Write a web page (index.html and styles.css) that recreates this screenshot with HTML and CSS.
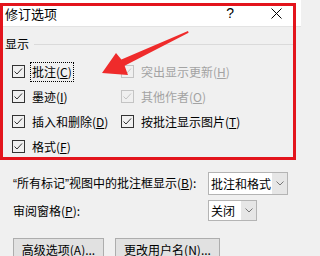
FILE: index.html
```html
<!DOCTYPE html>
<html lang="zh-CN">
<head>
<meta charset="utf-8">
<title>修订选项</title>
<link rel="stylesheet" href="styles.css">
</head>
<body>
<div class="dialog">
  <div class="titlebar">
    <span class="title">修订选项</span>
    <span class="controls">
      <span class="help">?</span>
      <svg class="close" width="11" height="11" viewBox="0 0 11 11"><path d="M0.5 0.5 L10.5 10.5 M10.5 0.5 L0.5 10.5" stroke="#000" stroke-width="1" fill="none"/></svg>
    </span>
  </div>

  <div class="group-head">
    <span>显示</span>
    <span class="rule"></span>
  </div>

  <div class="options">
    <label class="opt">
      <svg class="cb" width="13" height="13" viewBox="0 0 13 13"><rect x="0.5" y="0.5" width="12" height="12" fill="none" stroke="#333"/><polyline points="2.5,6.5 5,9 10,3.5" fill="none" stroke="#333" stroke-width="1"/></svg>
      <span class="focus">批注(<u>C</u>)</span>
    </label>
    <label class="opt disabled">
      <svg class="cb" width="13" height="13" viewBox="0 0 13 13"><rect x="0.5" y="0.5" width="12" height="12" fill="none" stroke="#c4c4c4"/><polyline points="2.5,6.5 5,9 10,3.5" fill="none" stroke="#c4c4c4" stroke-width="1"/></svg>
      <span>突出显示更新(<u>H</u>)</span>
    </label>
    <label class="opt">
      <svg class="cb" width="13" height="13" viewBox="0 0 13 13"><rect x="0.5" y="0.5" width="12" height="12" fill="none" stroke="#333"/><polyline points="2.5,6.5 5,9 10,3.5" fill="none" stroke="#333" stroke-width="1"/></svg>
      <span>墨迹(<u>I</u>)</span>
    </label>
    <label class="opt disabled">
      <svg class="cb" width="13" height="13" viewBox="0 0 13 13"><rect x="0.5" y="0.5" width="12" height="12" fill="none" stroke="#c4c4c4"/><polyline points="2.5,6.5 5,9 10,3.5" fill="none" stroke="#c4c4c4" stroke-width="1"/></svg>
      <span>其他作者(<u>O</u>)</span>
    </label>
    <label class="opt">
      <svg class="cb" width="13" height="13" viewBox="0 0 13 13"><rect x="0.5" y="0.5" width="12" height="12" fill="none" stroke="#333"/><polyline points="2.5,6.5 5,9 10,3.5" fill="none" stroke="#333" stroke-width="1"/></svg>
      <span>插入和删除(<u>D</u>)</span>
    </label>
    <label class="opt">
      <svg class="cb" width="13" height="13" viewBox="0 0 13 13"><rect x="0.5" y="0.5" width="12" height="12" fill="none" stroke="#333"/><polyline points="2.5,6.5 5,9 10,3.5" fill="none" stroke="#333" stroke-width="1"/></svg>
      <span>按批注显示图片(<u>T</u>)</span>
    </label>
    <label class="opt">
      <svg class="cb" width="13" height="13" viewBox="0 0 13 13"><rect x="0.5" y="0.5" width="12" height="12" fill="none" stroke="#333"/><polyline points="2.5,6.5 5,9 10,3.5" fill="none" stroke="#333" stroke-width="1"/></svg>
      <span>格式(<u>F</u>)</span>
    </label>
  </div>

  <div class="form-row first">
    <span class="label"><span class="q">“</span>所有标记<span class="q">”</span>视图中的批注框显示(<u>B</u>):</span>
    <div class="combo wide">
      <span class="value">批注和格式</span>
      <span class="arrow"><svg width="8" height="5" viewBox="0 0 8 5"><polyline points="0.5,0.5 4,4 7.5,0.5" fill="none" stroke="#777" stroke-width="1"/></svg></span>
    </div>
  </div>
  <div class="form-row second">
    <span class="label">审阅窗格(<u>P</u>):</span>
    <div class="combo narrow">
      <span class="value">关闭</span>
      <span class="arrow"><svg width="8" height="5" viewBox="0 0 8 5"><polyline points="0.5,0.5 4,4 7.5,0.5" fill="none" stroke="#777" stroke-width="1"/></svg></span>
    </div>
  </div>

  <div class="buttons">
    <button class="btn adv">高级选项(<u>A</u>)...</button>
    <button class="btn user">更改用户名(<u>N</u>)...</button>
  </div>

  <div class="highlight"></div>
  <svg class="pointer" width="301" height="256" viewBox="0 0 301 256">
    <polygon points="102,73 116,53 121.4,59.5 188,31 188.6,32.8 124.6,65.8 128,75" fill="#ef2b2b"/>
  </svg>
</div>
</body>
</html>
```

FILE: styles.css
```css
html, body {
  margin: 0;
  padding: 0;
}
body {
  width: 301px;
  height: 256px;
  overflow: hidden;
  background: #f0f0f0;
  font-family: "Noto Sans CJK SC", "Microsoft YaHei", sans-serif;
  font-size: 12px;
  line-height: 16px;
  color: #000;
}
.dialog {
  position: relative;
  width: 301px;
  height: 256px;
  overflow: hidden;
}
u {
  text-decoration: underline;
  text-underline-offset: 1px;
}
.titlebar {
  height: 27px;
  box-sizing: border-box;
  background: #fff;
  border-bottom: 1px solid #e3e3e3;
  display: flex;
  align-items: center;
  justify-content: space-between;
  padding: 0 19px 0 5px;
}
.title {
  font-size: 13px;
  line-height: 13px;
}
.controls {
  display: flex;
  align-items: center;
  gap: 37px;
}
.help {
  font-family: "Liberation Sans", sans-serif;
  font-size: 14px;
  line-height: 14px;
}
.close {
  display: block;
}
.group-head {
  display: flex;
  align-items: center;
  height: 16px;
  margin-top: 9px;
  padding-left: 5px;
  padding-right: 8px;
}
.rule {
  flex: 1;
  height: 1px;
  background: #dadada;
  margin-left: 5px;
}
.options {
  display: grid;
  grid-template-columns: 109px auto;
  grid-auto-rows: 25px;
  padding-left: 12px;
  margin-top: 7px;
}
.opt {
  display: flex;
  align-items: center;
  gap: 7px;
  white-space: nowrap;
}
.cb {
  display: block;
  flex: none;
}
.opt.disabled {
  color: #a3a3a3;
}
.focus {
  outline: 1px dotted #000;
  outline-offset: 1px;
}
.form-row {
  display: grid;
  grid-template-columns: 195px auto;
  align-items: center;
  padding-left: 13px;
}
.label {
  white-space: nowrap;
}
.q {
  font-family: "Liberation Sans", sans-serif;
}
.form-row.first {
  margin-top: 13px;
}
.form-row.second {
  margin-top: 5px;
}
.combo {
  display: flex;
  box-sizing: border-box;
  border: 1px solid #b4b4b4;
  background: #fff;
}
.combo.wide {
  width: 80px;
  height: 23px;
}
.combo.narrow {
  width: 49px;
  height: 21px;
}
.value {
  flex: 1;
  display: flex;
  align-items: center;
  padding-left: 2px;
  white-space: nowrap;
  overflow: hidden;
}
.arrow {
  width: 15px;
  flex: none;
  background: #e6e6e6;
  display: flex;
  align-items: center;
  justify-content: center;
}
.arrow svg {
  display: block;
}
.buttons {
  display: flex;
  gap: 11px;
  padding-left: 13px;
  margin-top: 17px;
}
.btn {
  font: inherit;
  color: #000;
  height: 23px;
  box-sizing: border-box;
  background: #e1e1e1;
  border: 1px solid #adadad;
  padding: 0;
  line-height: 20px;
  white-space: nowrap;
}
.btn.adv {
  width: 91px;
}
.btn.user {
  width: 105px;
}
.highlight {
  position: absolute;
  left: 0;
  top: 3px;
  width: 296px;
  height: 157px;
  box-sizing: border-box;
  border: 3px solid #e3141c;
  pointer-events: none;
}
.pointer {
  position: absolute;
  left: 0;
  top: 0;
  pointer-events: none;
}
```
